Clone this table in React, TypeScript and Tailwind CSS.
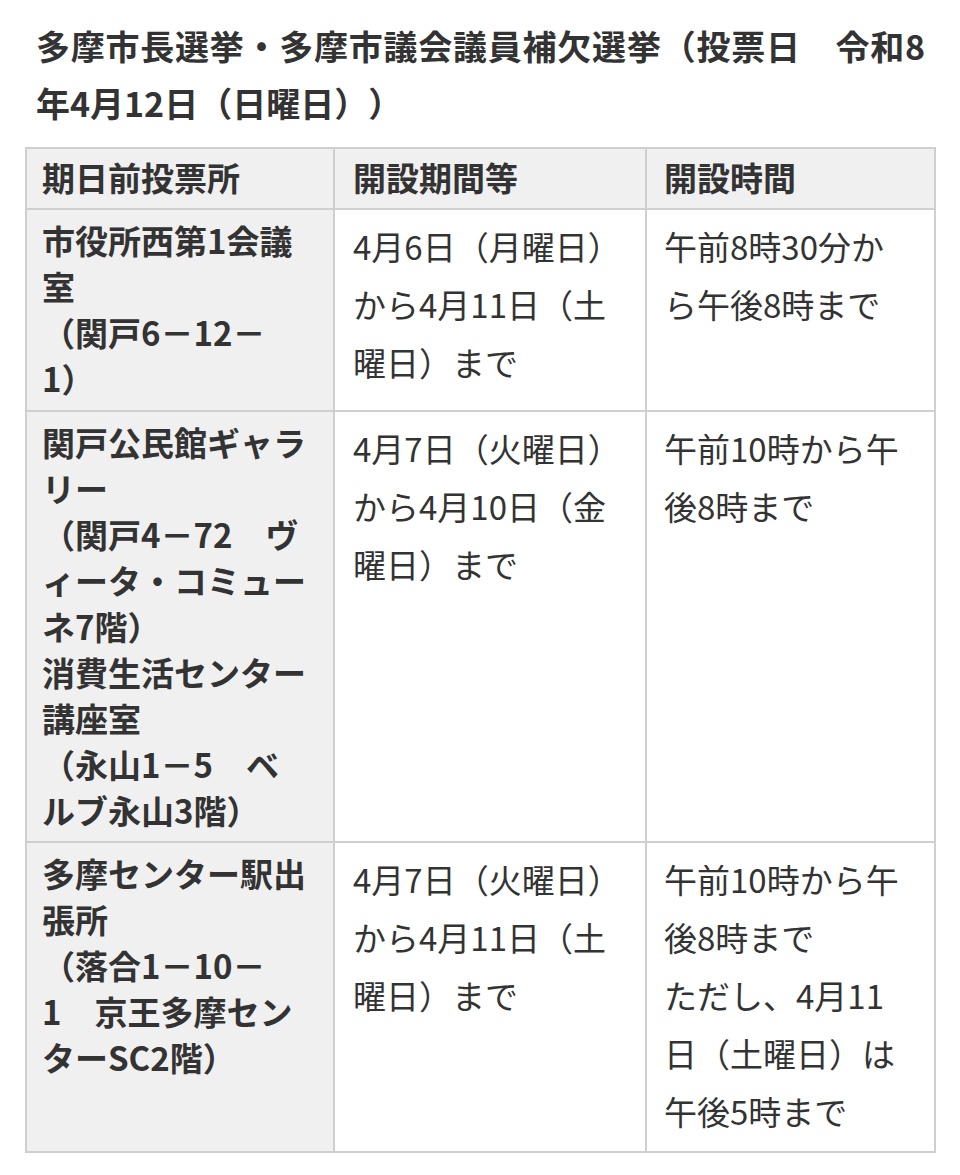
import React from "react";

const rows: { place: string[]; period: string[]; hours: string[] }[] = [
  {
    place: ["市役所西第1会議", "室", "（関戸6－12－", "1）"],
    period: ["4月6日（月曜日）", "から4月11日（土", "曜日）まで"],
    hours: ["午前8時30分か", "ら午後8時まで"],
  },
  {
    place: [
      "関戸公民館ギャラ",
      "リー",
      "（関戸4－72　ヴ",
      "ィータ・コミュー",
      "ネ7階）",
      "消費生活センター",
      "講座室",
      "（永山1－5　ベ",
      "ルブ永山3階）",
    ],
    period: ["4月7日（火曜日）", "から4月10日（金", "曜日）まで"],
    hours: ["午前10時から午", "後8時まで"],
  },
  {
    place: ["多摩センター駅出", "張所", "（落合1－10－", "1　京王多摩セン", "ターSC2階）"],
    period: ["4月7日（火曜日）", "から4月11日（土", "曜日）まで"],
    hours: ["午前10時から午", "後8時まで", "ただし、4月11", "日（土曜日）は", "午後5時まで"],
  },
];

function Lines({ lines }: { lines: string[] }) {
  return (
    <>
      {lines.map((l, i) => (
        <span key={i} className="block whitespace-nowrap">
          {l}
        </span>
      ))}
    </>
  );
}

export default function App() {
  return (
    <div className="w-[960px] min-h-[1175px] bg-white pb-[22px] font-['Noto_Sans_CJK_JP','Noto_Sans',sans-serif] text-[#333333] [text-spacing-trim:space-all]">
      <h2 className="ml-[36px] w-[889px] pt-[17px] text-[34px] font-bold leading-[57px]">
        <span className="block text-justify [text-align-last:justify]">
          多摩市長選挙・多摩市議会議員補欠選挙（投票日　令和8
        </span>
        <span className="block">年4月12日（日曜日））</span>
      </h2>
      <div className="ml-[25px] mt-[16px] grid w-[911px] grid-cols-[306px_310px_287px] grid-rows-[59px_200px_429px_308px] gap-[2px] bg-[#cfcfcf] p-[2px] text-[33px]">
        <div className="bg-[#f0f0f0] pl-[15px] pt-[5px] font-bold leading-[46px]">期日前投票所</div>
        <div className="bg-[#f0f0f0] pl-[18px] pt-[5px] font-bold leading-[46px]">開設期間等</div>
        <div className="bg-[#f0f0f0] pl-[17px] pt-[5px] font-bold leading-[46px]">開設時間</div>
        {rows.map((r, i) => (
          <React.Fragment key={i}>
            <div className="bg-[#f0f0f0] pl-[15px] pt-[7px] font-bold leading-[46px]">
              <Lines lines={r.place} />
            </div>
            <div className="bg-white pl-[18px] pt-[7px] font-normal leading-[58px]">
              <Lines lines={r.period} />
            </div>
            <div className="bg-white pl-[17px] pt-[7px] font-normal leading-[58px]">
              <Lines lines={r.hours} />
            </div>
          </React.Fragment>
        ))}
      </div>
    </div>
  );
}
